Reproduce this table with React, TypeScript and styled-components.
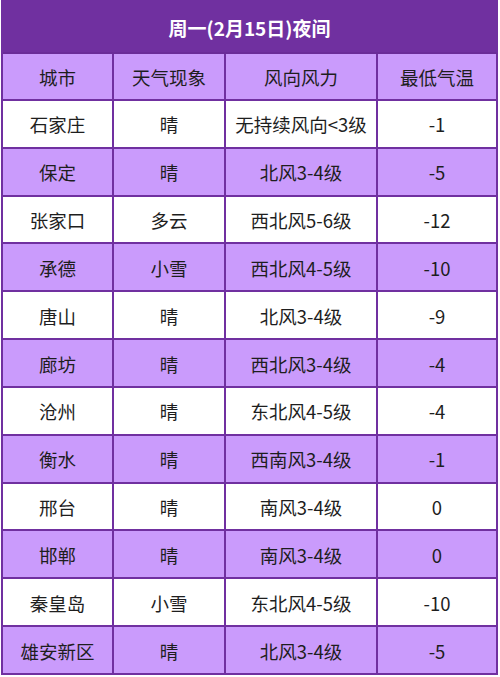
import React from "react";
import styled, { createGlobalStyle } from "styled-components";

const Global = createGlobalStyle`
  html, body { margin: 0; padding: 0; background: #ffffff; }
  body { font-family: "Noto Sans CJK SC", "Noto Sans", sans-serif; }
`;

const PURPLE = "#7030a0";
const LIGHT = "#ca9bfc";

const Grid = styled.div`
  margin-left: 1px;
  width: 497px;
  display: grid;
  grid-template-columns: 111px 112px 152px 120px;
  grid-template-rows: 52px 47px;
  grid-auto-rows: 47.83px;
  border-top: 2px solid ${PURPLE};
  border-left: 2px solid ${PURPLE};
  box-sizing: border-box;
`;

const Title = styled.div`
  grid-column: 1 / -1;
  background: ${PURPLE};
  color: #ffffff;
  font-weight: 700;
  font-size: 19px;
  display: flex;
  align-items: center;
  justify-content: center;
  border-right: 2px solid ${PURPLE};
  border-bottom: 2px solid #6a2c98;
  box-sizing: border-box;
`;

const Cell = styled.div<{ $shade: boolean }>`
  background: ${(p) => (p.$shade ? LIGHT : "#ffffff")};
  color: #1e1e1e;
  font-size: 18.5px;
  display: flex;
  align-items: center;
  justify-content: center;
  border-right: 2px solid ${PURPLE};
  border-bottom: 2px solid ${PURPLE};
  box-sizing: border-box;
  white-space: nowrap;
  padding-top: 1px;
`;

const header = ["城市", "天气现象", "风向风力", "最低气温"];
const rows: string[][] = [
  ["石家庄", "晴", "无持续风向<3级", "-1"],
  ["保定", "晴", "北风3-4级", "-5"],
  ["张家口", "多云", "西北风5-6级", "-12"],
  ["承德", "小雪", "西北风4-5级", "-10"],
  ["唐山", "晴", "北风3-4级", "-9"],
  ["廊坊", "晴", "西北风3-4级", "-4"],
  ["沧州", "晴", "东北风4-5级", "-4"],
  ["衡水", "晴", "西南风3-4级", "-1"],
  ["邢台", "晴", "南风3-4级", "0"],
  ["邯郸", "晴", "南风3-4级", "0"],
  ["秦皇岛", "小雪", "东北风4-5级", "-10"],
  ["雄安新区", "晴", "北风3-4级", "-5"],
];

export default function App() {
  return (
    <>
      <Global />
      <Grid>
        <Title>周一(2月15日)夜间</Title>
        {header.map((h) => (
          <Cell key={h} $shade>
            {h}
          </Cell>
        ))}
        {rows.map((r, i) =>
          r.map((c, j) => (
            <Cell key={`${i}-${j}`} $shade={i % 2 === 1}>
              {c}
            </Cell>
          ))
        )}
      </Grid>
    </>
  );
}
